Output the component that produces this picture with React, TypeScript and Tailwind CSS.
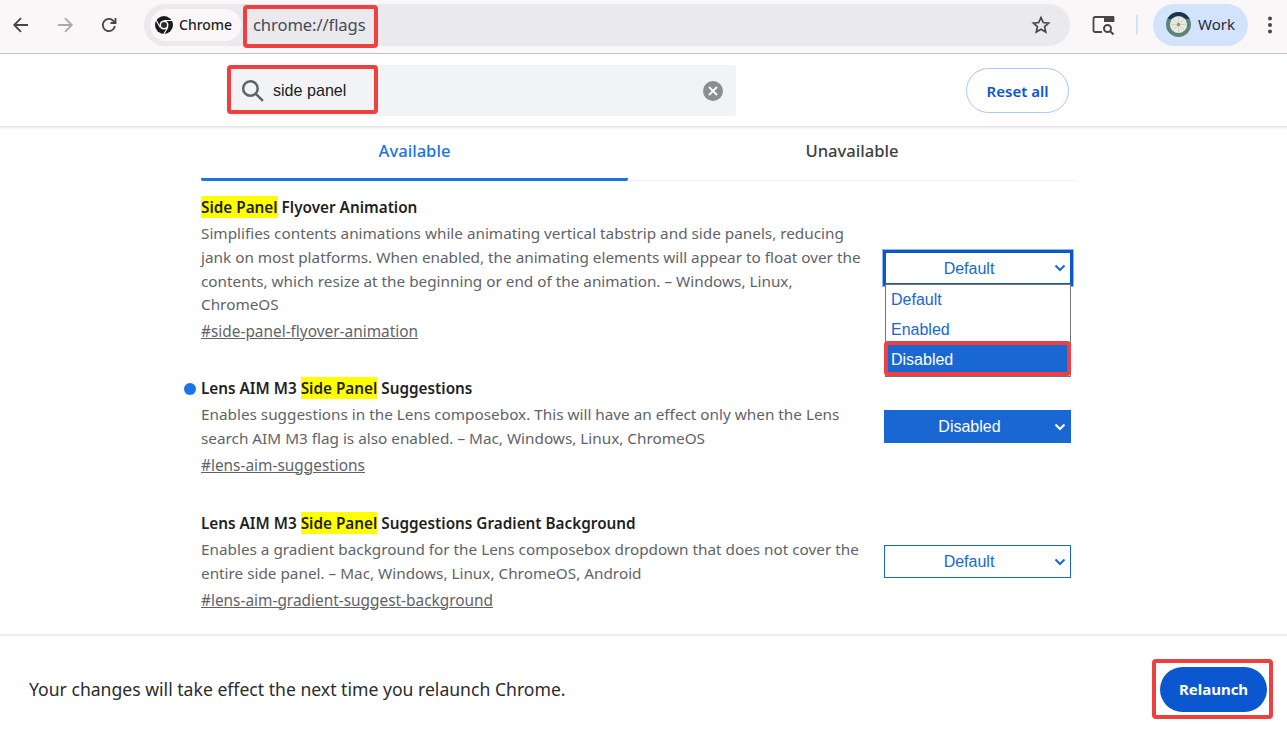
import React from "react";

const ui = "font-['Noto_Sans','Open_Sans',sans-serif]";
const arial = "font-['Liberation_Sans',Arial,sans-serif]";

function Mark({ children }: { children: React.ReactNode }) {
  return <mark className="bg-[#ffff00] text-[#1f1f1f] py-[1px]">{children}</mark>;
}

function Chevron({ color }: { color: string }) {
  return (
    <svg width="12" height="8" viewBox="0 0 12 8" fill="none" stroke={color} strokeWidth="2" className="absolute right-[4px] top-1/2 -translate-y-1/2">
      <path d="M1.500 1.500 6 6l4.500-4.500" />
    </svg>
  );
}

function Sel({ label, variant }: { label: string; variant: "plain" | "on" | "open" }) {
  const cls =
    variant === "on"
      ? "bg-[#1967d2] text-white border border-[#1967d2] w-[187px] h-[33px] pr-[16px]"
      : variant === "open"
        ? "bg-white text-[#1967d2] border-[3px] border-[#0b57d0] outline outline-1 outline-[#8fb4ea] w-[190px] h-[36px] -mr-[2px] pr-[18px] pt-[1px]"
        : "bg-white text-[#1967d2] border border-[#1967d2] w-[187px] h-[33px] pr-[17px]";
  return (
    <div className={`relative flex items-center justify-center text-[16px] ${arial} ${cls}`}>
      {label}
      <Chevron color={variant === "on" ? "#ffffff" : "#1967d2"} />
    </div>
  );
}

function Flag({
  title,
  desc,
  link,
  dot,
  children,
  h,
}: {
  title: React.ReactNode;
  desc: React.ReactNode;
  link: string;
  dot?: boolean;
  children: React.ReactNode;
  h: string;
}) {
  return (
    <div className={`relative flex justify-between ${h}`}>
      {dot && <span className="absolute left-[-17px] top-[5px] w-[12px] h-[12px] rounded-full bg-[#1a73e8]" />}
      <div className="w-[662px]">
        <h2 className="text-[15.300px] leading-[21px] font-semibold text-[#1f1f1f]">{title}</h2>
        <p className="mt-[4px] text-[15.300px] leading-[23.800px] text-[#5f6368]">{desc}</p>
        <a className="block mt-[3px] text-[15.400px] leading-[24px] text-[#5f6368] underline">{link}</a>
      </div>
      {children}
    </div>
  );
}

function RedBox({ className }: { className: string }) {
  return <div className={`absolute border-[4px] border-[#ef4040] rounded-[4px] pointer-events-none ${className}`} />;
}

export default function App() {
  return (
    <div className={`relative w-[1287px] h-[730px] overflow-hidden bg-white flex flex-col ${ui}`}>
      {/* Browser toolbar */}
      <header className="h-[54px] shrink-0 flex items-center pb-[4px] bg-[#fbf7f8] border-b border-[#c4c0c1]">
        <div className="w-[144px] pl-[11px] flex items-center gap-[24px] shrink-0">
          <svg width="20" height="20" viewBox="0 0 20 20" fill="none" stroke="#474747" strokeWidth="1.800"><path d="M17 10H3.500M10 3.200 3.200 10l6.800 6.800" /></svg>
          <svg width="20" height="20" viewBox="0 0 20 20" fill="none" stroke="#a9a9a9" strokeWidth="1.800"><path d="M3 10h13.500M10 3.200l6.800 6.800-6.800 6.800" /></svg>
          <svg width="20" height="20" viewBox="0 0 20 20" fill="none" stroke="#474747" strokeWidth="1.800"><path d="M15.900 11a6.100 6.100 0 1 1-1.500-5.100L16.500 8M16.500 3v5h-5" /></svg>
        </div>
        <div className="w-[926px] h-[42px] shrink-0 rounded-full bg-[#e9e9ee] flex items-center pl-[6px]">
          <div className="w-[91px] h-[32px] rounded-full bg-[#fbf7f8] flex items-center pl-[5px] gap-[6px]">
            <svg width="18" height="18" viewBox="0 0 48 48">
              <circle cx="24" cy="24" r="24" fill="#1c1c1c" />
              <circle cx="24" cy="24" r="12" fill="#fff" />
              <circle cx="24" cy="24" r="8" fill="#2e2e2e" />
              <path d="M24 12h22M13.600 30 3 11.500M34.400 30 23.500 48" stroke="#fff" strokeWidth="3" />
            </svg>
            <span className="text-[14px] font-medium text-[#1f1f1f] leading-none">Chrome</span>
          </div>
          <span className="ml-[12px] mt-[2px] text-[16.600px] tracking-[-0.100px] text-[#474b57] leading-none">chrome://flags</span>
          <svg className="ml-auto mr-[19px]" width="20" height="20" viewBox="0 0 24 24" fill="none" stroke="#474747" strokeWidth="2"><path d="m12 3 2.700 6 6.500.7-4.900 4.300 1.400 6.400L12 17.100 6.300 20.400l1.400-6.400-4.900-4.300 6.500-.7z" /></svg>
        </div>
        <svg className="ml-[22px]" width="24" height="22" viewBox="0 0 24 22" fill="none" stroke="#474747" strokeWidth="1.800">
          <path d="M10 18H3a1.500 1.500 0 0 1-1.500-1.500v-12A1.500 1.500 0 0 1 3 3h12" />
          <rect x="12" y="2" width="10" height="6" fill="#474747" stroke="none" />
          <path d="M21.500 3v5" />
          <circle cx="15.500" cy="14.500" r="3.500" strokeWidth="2" />
          <path d="m18 17 3.500 3.500" strokeWidth="2" />
        </svg>
        <div className="ml-[20px] w-[2px] h-[20px] bg-[#d3e3fd]" />
        <div className="ml-[15px] w-[95px] h-[42px] rounded-full bg-[#d3e3fd] flex items-center pl-[13px] gap-[7px]">
          <svg width="25" height="25" viewBox="0 0 25 25">
            <defs>
              <clipPath id="c"><circle cx="12.500" cy="12.500" r="12.500" /></clipPath>
            </defs>
            <g clipPath="url(#c)">
              <rect width="25" height="25" fill="#5b8573" />
              <rect width="25" height="7" fill="#1d3550" />
              <circle cx="12.500" cy="12.500" r="8.600" fill="#e6e9e4" />
              <path d="M12.500 4.500v16M4.500 12.500h16M6.800 6.800l11.400 11.400M18.200 6.800 6.800 18.200" stroke="#c4cbc5" strokeWidth="0.800" />
              <circle cx="12.500" cy="12.500" r="1.800" fill="#c98a2b" />
            </g>
          </svg>
          <span className="text-[15px] text-[#1f2a3d] leading-none">Work</span>
        </div>
        <svg className="ml-[20px]" width="4" height="18" viewBox="0 0 4 18" fill="#474747">
          <circle cx="2" cy="2.500" r="2" /><circle cx="2" cy="9" r="2" /><circle cx="2" cy="15.500" r="2" />
        </svg>
      </header>

      {/* Search header */}
      <div className="relative z-10 h-[72px] shrink-0 bg-white shadow-[0_2px_2px_rgba(0,0,0,0.1)] flex items-start pt-[11px]">
        <div className={`ml-[227px] w-[509px] h-[51px] bg-[#f1f3f4] rounded-[3px] flex items-center pl-[13px] pr-[13px] ${arial}`}>
          <svg width="25" height="25" viewBox="0 0 24 24" fill="none" stroke="#5f6368" strokeWidth="2.400">
            <circle cx="10" cy="10" r="7" /><path d="m15 15 7 7" />
          </svg>
          <span className="ml-[8px] text-[16.100px] text-[#202124]">side panel</span>
          <span className="ml-auto w-[20px] h-[20px] rounded-full bg-[#8a8d91] flex items-center justify-center">
            <svg width="10" height="10" viewBox="0 0 10 10" stroke="#fff" strokeWidth="1.800"><path d="m1 1 8 8M9 1 1 9" /></svg>
          </span>
        </div>
        <button className="ml-[230px] mt-[3px] pt-[1px] w-[103px] h-[45px] rounded-full border border-[#a8c7fa] bg-white text-[15px] font-semibold text-[#0b57d0]">Reset all</button>
      </div>

      {/* Main */}
      <main className="flex-1 min-h-0 pt-[1px] pl-[201px] pr-[211px]">
        <div className="flex h-[54px] border-b border-[#eceff1]">
          <div className="w-[427px] h-[54px] flex items-start justify-center pt-[12px] border-b-[3px] border-[#1a73e8] rounded-b-[2px] text-[16.600px] leading-[24px] font-medium text-[#1a73e8]">Available</div>
          <div className="flex-1 flex items-start justify-center pt-[12px] text-[16.600px] leading-[24px] font-medium text-[#3c4043]">Unavailable</div>
        </div>
        <div className="mt-[16px] pr-[5px]">
          <Flag
            h="h-[181px]"
            title={<><Mark>Side Panel</Mark> Flyover Animation</>}
            desc="Simplifies contents animations while animating vertical tabstrip and side panels, reducing jank on most platforms. When enabled, the animating elements will appear to float over the contents, which resize at the beginning or end of the animation. – Windows, Linux, ChromeOS"
            link="#side-panel-flyover-animation"
          >
            <div className="mt-[53px]"><Sel label="Default" variant="open" /></div>
          </Flag>
          <Flag
            dot
            h="h-[135px]"
            title={<>Lens AIM M3 <Mark>Side Panel</Mark> Suggestions</>}
            desc="Enables suggestions in the Lens composebox. This will have an effect only when the Lens search AIM M3 flag is also enabled. – Mac, Windows, Linux, ChromeOS"
            link="#lens-aim-suggestions"
          >
            <div className="mt-[32px]"><Sel label="Disabled" variant="on" /></div>
          </Flag>
          <Flag
            h="h-[110px]"
            title={<>Lens AIM M3 <Mark>Side Panel</Mark> Suggestions Gradient Background</>}
            desc="Enables a gradient background for the Lens composebox dropdown that does not cover the entire side panel. – Mac, Windows, Linux, ChromeOS, Android"
            link="#lens-aim-gradient-suggest-background"
          >
            <div className="mt-[32px]"><Sel label="Default" variant="plain" /></div>
          </Flag>
        </div>
      </main>

      {/* Relaunch bar */}
      <footer className="relative z-10 h-[95px] shrink-0 bg-white border-t border-[#e8e8e8] shadow-[0_-1px_2px_rgba(0,0,0,0.08)] flex items-center pt-[12px] pl-[29px] pr-[20px]">
        <span className="text-[17.600px] text-[#2b2b2b]">Your changes will take effect the next time you relaunch Chrome.</span>
        <button className="ml-auto pt-[1px] w-[107px] h-[45px] rounded-full bg-[#0b57d0] text-white text-[15px] font-bold">Relaunch</button>
      </footer>

      {/* Open select menu */}
      <div className={`absolute z-20 left-[885px] top-[284px] w-[186px] h-[93px] bg-white border border-[#767676] text-[16px] leading-[30px] text-[#1967d2] ${arial}`}>
        <div className="pl-[5px] h-[30px]">Default</div>
        <div className="pl-[5px] h-[30px]">Enabled</div>
        <div className="pl-[5px] h-[30px] bg-[#1967d2] text-white">Disabled</div>
      </div>

      {/* Annotation boxes */}
      <RedBox className="z-30 left-[243px] top-[5px] w-[135px] h-[43px]" />
      <RedBox className="z-30 left-[227px] top-[65px] w-[151px] h-[49px]" />
      <RedBox className="z-30 left-[884px] top-[341px] w-[187px] h-[35px]" />
      <RedBox className="z-30 left-[1152px] top-[659px] w-[121px] h-[60px]" />
    </div>
  );
}
